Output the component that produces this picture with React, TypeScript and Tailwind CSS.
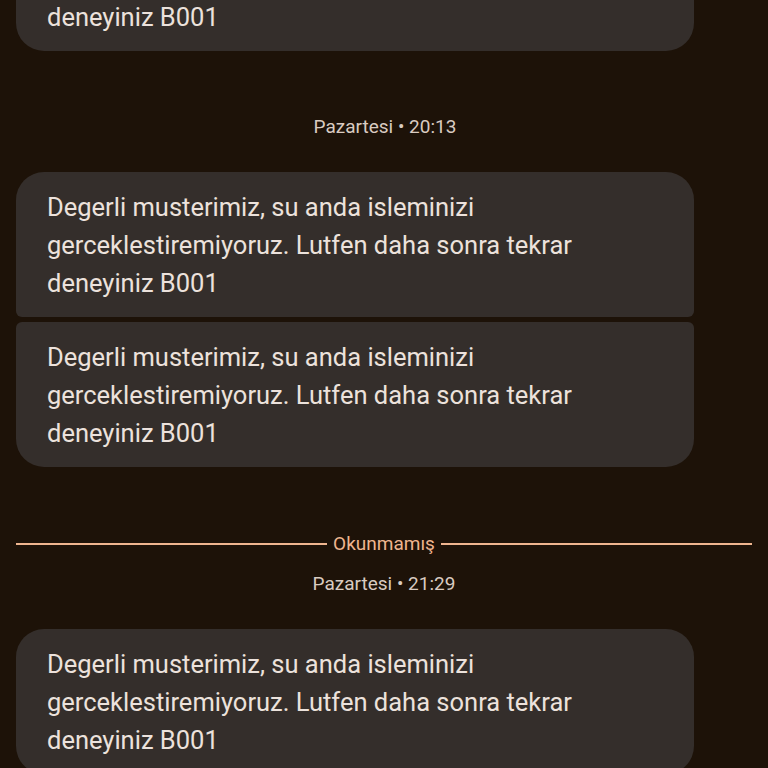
import React from "react";

function Bubble({ cls }: { cls: string }) {
  return (
    <div className={"ml-4 w-[678px] bg-[#342e2b] pl-[31px] pr-6 py-[15.5px] text-[25.5px] leading-[38px] text-[#ece2dc] " + cls}>
      Degerli musterimiz, su anda isleminizi
      <br />
      gerceklestiremiyoruz. Lutfen daha sonra tekrar
      <br />
      deneyiniz B001
    </div>
  );
}

function Stamp({ t, cls }: { t: string; cls: string }) {
  return (
    <div className={"text-center text-[19px] leading-[22px] text-[#d9cbc1] " + cls}>
      Pazartesi • {t}
    </div>
  );
}

export default function App() {
  return (
    <div
      className="h-[768px] w-[768px] overflow-hidden bg-[#1d1208]"
      style={{ fontFamily: "Roboto, 'Noto Sans', sans-serif" }}
    >
      <div className="flex flex-col mt-[-94px]">
        <Bubble cls="rounded-[28px]" />
        <Stamp t="20:13" cls="mt-[65px] mb-[34px] pl-[2px]" />
        <Bubble cls="rounded-t-[28px] rounded-b-[6px]" />
        <Bubble cls="mt-[5px] rounded-t-[6px] rounded-b-[28px]" />
        <div className="mt-[66px] flex items-center gap-[6px] px-4">
          <div className="h-[2px] flex-1 bg-[#efb58f]" />
          <span className="text-[19px] leading-[22px] text-[#efb58f]">Okunmamış</span>
          <div className="h-[2px] flex-1 bg-[#efb58f]" />
        </div>
        <Stamp t="21:29" cls="mt-[18px] mb-[34px]" />
        <Bubble cls="rounded-[28px]" />
      </div>
    </div>
  );
}
